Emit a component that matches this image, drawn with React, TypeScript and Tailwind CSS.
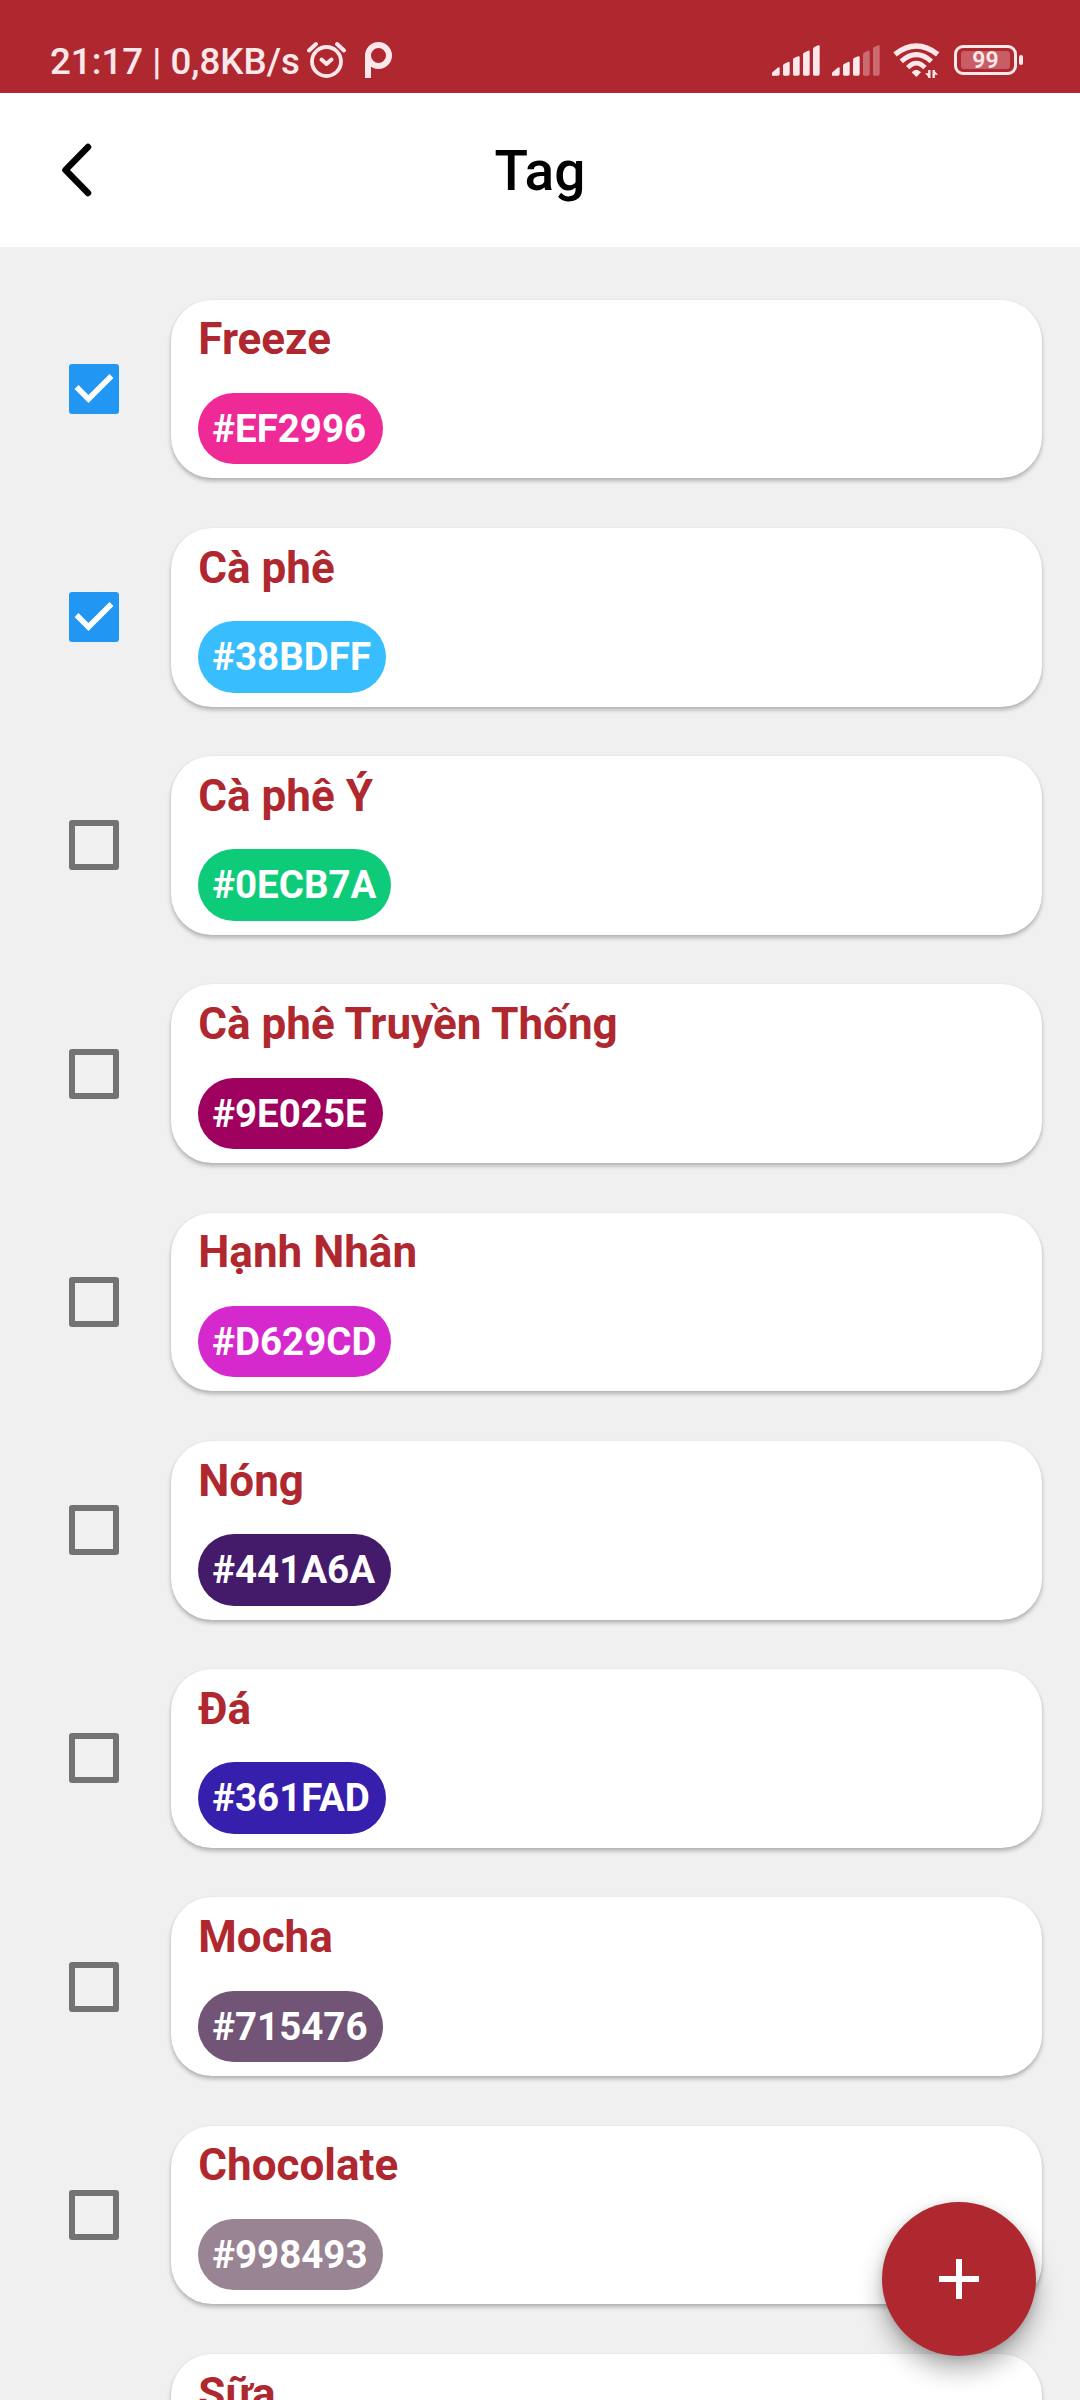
import React from "react";

const tags = [
  { name: "Freeze", color: "#EF2996", width: 185, checked: true },
  { name: "Cà phê", color: "#38BDFF", width: 187.5, checked: true },
  { name: "Cà phê Ý", color: "#0ECB7A", width: 193, checked: false },
  { name: "Cà phê Truyền Thống", color: "#9E025E", width: 185, checked: false },
  { name: "Hạnh Nhân", color: "#D629CD", width: 193, checked: false },
  { name: "Nóng", color: "#441A6A", width: 193, checked: false },
  { name: "Đá", color: "#361FAD", width: 187.5, checked: false },
  { name: "Mocha", color: "#715476", width: 185, checked: false },
  { name: "Chocolate", color: "#998493", width: 185, checked: false },
  { name: "Sữa", color: "#C9B8A5", width: 193, checked: false },
];

function Signal({ strength }: { strength: number }) {
  const bars = [
    "M0 92V85Q0 82 3 80L17 68Q23 65 23 70V87Q23 92 18 92Z",
    "M33 88V62Q33 59 36 57L48 51Q53 49 53 54V87Q53 92 48 92H37Q33 92 33 88Z",
    "M63 88V44Q63 41 66 39L78 34Q83 32 83 37V87Q83 92 78 92H67Q63 92 63 88Z",
    "M93 88V28Q93 25 96 23L108 17Q113 15 113 20V87Q113 92 108 92H97Q93 92 93 88Z",
    "M123 88V13Q123 9 126 7L138 1Q143 -1 143 4V87Q143 92 138 92H127Q123 92 123 88Z",
  ];
  return (
    <svg className="h-[31px] w-[48px]" viewBox="0 0 144 93" fill="#FCE8EA">
      {bars.map((d, i) => (
        <path key={i} d={d} opacity={i < strength ? 1 : 0.35} />
      ))}
    </svg>
  );
}

function StatusBar() {
  return (
    <div className="flex h-[93px] shrink-0 items-start bg-[#B0282F] pl-[50px] text-[#FCE8EA]">
      <span className="mt-[40px] w-[257px] text-[36.700px] leading-[44px] font-medium whitespace-nowrap">21:17 | 0,8KB/s</span>
      <svg className="mt-[41px] h-[38px] w-[39px]" viewBox="0 0 39 38" fill="none" stroke="#FCE8EA" strokeLinecap="round">
        <circle cx="19.500" cy="20.500" r="14.500" strokeWidth="3.800" />
        <path d="M2 9.500 9 3M30 3l7 6.500" strokeWidth="4" />
        <path d="m14.500 18.500 5 4.500 5-4.500" strokeWidth="4" strokeLinejoin="round" />
      </svg>
      <svg className="mt-[42px] ml-[19px] h-[37px] w-[27px]" viewBox="0 0 27 37" fill="none" stroke="#FCE8EA" strokeWidth="6">
        <path d="M3 36V13.500A10.500 10.500 0 1 1 13.500 24A10.500 10.500 0 0 1 3 13.500" />
      </svg>
      <div className="mt-[42px] ml-auto flex items-start pr-[57px]">
        <div className="mt-[3px]"><Signal strength={5} /></div>
        <div className="mt-[3px] ml-[12px]"><Signal strength={3} /></div>
        <svg className="mt-px ml-[13px] h-[36px] w-[47px]" viewBox="0 0 141 108" fill="none" stroke="#FCE8EA">
          <path d="M6 34Q70 -16 134 34" strokeWidth="16" />
          <path d="M25 55Q70 15 115 55" strokeWidth="15" />
          <path d="M44 74Q70 47 96 74" strokeWidth="14" />
          <path d="M56 88Q70 73 84 88L70 102Z" fill="#FCE8EA" stroke="none" />
          <path d="M109 81v24M122 81v24" strokeWidth="7" />
          <path d="M96 91l13 14V91ZM135 95l-13-14v14Z" fill="#FCE8EA" stroke="none" />
        </svg>
        <div className="mt-[3px] ml-[14px] flex items-center">
          <div className="flex h-[30px] w-[63px] items-center justify-center rounded-[9px] border-[3px] border-[#FCE8EA]">
            <div className="flex h-[18px] w-[49px] items-center justify-center rounded-[3px] bg-[#C85D65] text-[23px] leading-none font-semibold">99</div>
          </div>
          <div className="ml-[2px] h-[10px] w-[4px] rounded-[2px] bg-[#FCE8EA]" />
        </div>
      </div>
    </div>
  );
}

function Checkbox({ checked }: { checked: boolean }) {
  if (!checked) return <div className="size-[50px] rounded-[3px] border-[6px] border-[#737373]" />;
  return (
    <div className="size-[50px] rounded-[3px] bg-[#2196F3]">
      <svg className="size-[50px]" viewBox="3 3 18 18" fill="#fff">
        <path d="M10 17l-5-5 1.410-1.410L10 14.170l7.590-7.590L19 8l-9 9z" />
      </svg>
    </div>
  );
}

export default function App() {
  return (
    <div className="relative flex h-[2400px] w-[1080px] flex-col overflow-hidden bg-[#F0F0F0] font-[Roboto,sans-serif]">
      <StatusBar />
      <header className="grid h-[154px] shrink-0 grid-cols-3 items-center bg-white px-[61px]">
        <svg className="h-[54px] w-[32px]" viewBox="0 0 32 54" fill="none" stroke="#000" strokeWidth="6.500" strokeLinecap="round" strokeLinejoin="round">
          <path d="M27 4 4.500 27 27 50" />
        </svg>
        <h1 className="pt-[2px] text-center text-[55px] leading-[64px] font-medium text-black">Tag</h1>
      </header>
      <main className="flex flex-col gap-[49.500px] pt-[52.600px]">
        {tags.map((tag) => (
          <div key={tag.name} className="flex h-[178.750px] shrink-0 items-center pr-[38px] pl-[69px]">
            <Checkbox checked={tag.checked} />
            <section className="ml-[52px] flex h-full flex-1 flex-col items-start rounded-[41px] bg-white pt-[13.750px] pl-[27.300px] shadow-[0_3px_4px_rgba(0,0,0,0.26),0_0_2px_rgba(0,0,0,0.06)]">
              <h2 className="text-[44px] leading-[52px] font-bold text-[#B0282F]">{tag.name}</h2>
              <span
                className="mt-[27.500px] flex h-[71.500px] items-center rounded-full pt-px pl-[13.900px] text-[38.500px] leading-none font-bold text-white"
                style={{ backgroundColor: tag.color, width: tag.width }}
              >
                {tag.color}
              </span>
            </section>
          </div>
        ))}
      </main>
      <button aria-label="Add tag" className="absolute top-[2202px] left-[882px] flex size-[154px] items-center justify-center rounded-full bg-[#B0282F] shadow-[0_14px_24px_rgba(0,0,0,0.3),0_2px_10px_rgba(0,0,0,0.14)]">
        <svg className="size-[40px]" viewBox="0 0 40 40" stroke="#fff" strokeWidth="6">
          <path d="M0 20h40M20 0v40" />
        </svg>
      </button>
    </div>
  );
}
